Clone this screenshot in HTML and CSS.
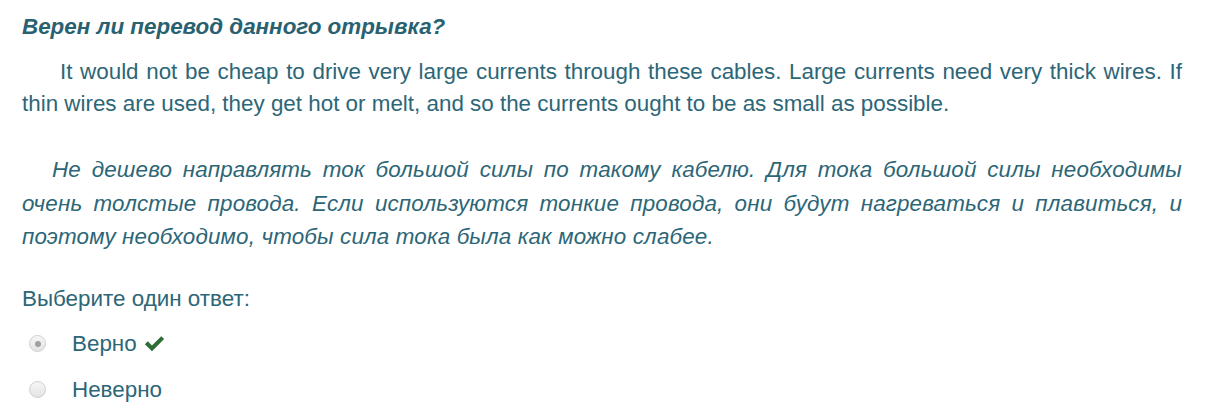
FILE: index.html
```html
<!DOCTYPE html>
<html lang="ru">
<head>
<meta charset="utf-8">
<link rel="stylesheet" href="styles.css">
</head>
<body>
<div class="que">
  <h3 class="title">Верен ли перевод данного отрывка?</h3>
  <p class="en">It would not be cheap to drive very large currents through these cables. Large currents need very thick wires. If thin wires are used, they get hot or melt, and so the currents ought to be as small as possible.</p>
  <p class="ru">Не дешево направлять ток большой силы по такому кабелю. Для тока большой силы необходимы очень толстые провода. Если используются тонкие провода, они будут нагреваться и плавиться, и поэтому необходимо, чтобы сила тока была как можно слабее.</p>
  <div class="prompt">Выберите один ответ:</div>
  <div class="answers">
    <div class="opt">
      <span class="radio checked"></span>
      <span class="label">Верно</span>
      <svg class="tick" viewBox="0 0 20 16" width="21" height="17"><path d="M0.8 8.6 L3.6 5.8 L7.6 9.8 L16.4 1 L19.2 3.8 L7.6 15.4 Z" fill="#2f6f36"/></svg>
    </div>
    <div class="opt">
      <span class="radio"></span>
      <span class="label">Неверно</span>
    </div>
  </div>
</div>
</body>
</html>
```
FILE: styles.css
```css
html, body { margin: 0; padding: 0; background: #fff; }
body { font-family: "Liberation Sans", Arial, sans-serif; color: #2c6677; }
.que { padding: 0 28px 0 22px; }
.title { margin: 0; padding-top: 13px; font-size: 22.4px; font-weight: bold; font-style: italic; line-height: 28px; color: #2a6171; }
.en { margin: 15px 0 0; font-size: 22.4px; line-height: 31.5px; text-indent: 38px; text-align: justify; }
.ru { margin: 34px 0 0; font-size: 22.4px; letter-spacing: 0.15px; line-height: 33.5px; font-style: italic; text-indent: 30px; text-align: justify; }
.prompt { margin-top: 31px; font-size: 22.4px; line-height: 28px; }
.answers { margin-top: 8px; }
.opt { display: flex; align-items: center; height: 46px; font-size: 22.4px; }
.radio { width: 17px; height: 17px; border-radius: 50%; border: 1px solid #cfcfcf; background: linear-gradient(#f6f6f6, #e4e4e4); box-sizing: border-box; margin-left: 7px; margin-right: 26px; position: relative; flex: none; }
.radio.checked::after { content: ""; position: absolute; left: 4.5px; top: 4.5px; width: 6px; height: 6px; border-radius: 50%; background: #a0a0a0; }
.tick { margin-left: 7px; }
```
